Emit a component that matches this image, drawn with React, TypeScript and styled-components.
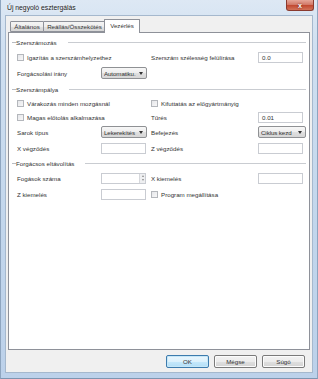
import React from "react";
import styled, { createGlobalStyle } from "styled-components";

const GlobalStyle = createGlobalStyle`
  html, body { margin: 0; padding: 0; background: #fff; }
  body { font-family: "Liberation Sans", Arial, sans-serif; }
  * { box-sizing: border-box; }
`;

const FONT = "6.2px";
const TEXT = "#333333";

const Window = styled.div`
  width: 318px;
  height: 379px;
  display: flex;
  flex-direction: column;
  padding: 0 4px 6px 4px;
  background: linear-gradient(180deg, #dde8f4 0%, #d0e0f1 12%, #c2d6ec 60%, #bcd1ea 100%);
  border-left: 1px solid #8ea5bf;
  border-right: 1px solid #8ea5bf;
  border-bottom: 1px solid #7d95b0;
  overflow: hidden;
`;

const TitleBar = styled.div`
  height: 15px;
  display: flex;
  align-items: flex-start;
  margin-left: -1px;
  margin-right: -1px;
`;

const Title = styled.div`
  font-family: "Liberation Sans", Arial, sans-serif;
  font-size: 6.8px;
  color: #1b1b1b;
  padding-left: 3px;
  line-height: 15px;
  text-shadow: 0 0 3px rgba(255, 255, 255, 0.9);
`;

const CloseButton = styled.div`
  margin-left: auto;
  width: 28px;
  height: 11px;
  border: 1px solid #8a3a2e;
  border-top: none;
  border-radius: 0 0 3px 3px;
  background: linear-gradient(180deg, #e6a699 0%, #d27a69 45%, #c24a32 55%, #d2735a 100%);
  display: flex;
  align-items: center;
  justify-content: center;
  color: #fff;
  font-size: 7px;
  font-weight: bold;
  line-height: 1;
  text-shadow: 0 0 2px #5a1a10;
`;

const Client = styled.div`
  flex: 1;
  display: flex;
  flex-direction: column;
  background: #f0f0f0;
  border: 1px solid #a5b8cd;
  padding: 3px 2px 0 2px;
`;

const TabRow = styled.div`
  height: 14px;
  display: flex;
  align-items: flex-end;
  padding-left: 2px;
  position: relative;
  z-index: 1;
  margin-bottom: -1px;
`;

const Tab = styled.div<{ $active?: boolean; $w: number }>`
  width: ${(p) => p.$w}px;
  height: ${(p) => (p.$active ? 14 : 11)}px;
  margin-left: ${(p) => (p.$active ? -2 : -1)}px;
  margin-bottom: ${(p) => (p.$active ? 0 : 1)}px;
  &:first-child { margin-left: 0; }
  border: 1px solid #8e9199;
  border-bottom: ${(p) => (p.$active ? "none" : "1px solid #8e9199")};
  border-radius: 1px 1px 0 0;
  background: ${(p) =>
    p.$active ? "#ffffff" : "linear-gradient(180deg, #f4f4f4 0%, #ededed 50%, #e0e0e0 51%, #d6d6d6 100%)"};
  font-size: ${FONT};
  color: ${TEXT};
  display: flex;
  align-items: ${(p) => (p.$active ? "flex-start" : "center")};
  padding-top: ${(p) => (p.$active ? 2 : 0)}px;
  justify-content: center;
  white-space: nowrap;
  position: relative;
  z-index: ${(p) => (p.$active ? 2 : 1)};
`;

const Panel = styled.div`
  height: 318px;
  background: #fff;
  border: 1px solid #8e9199;
  padding: 2px 3px 0 3px;
  display: flex;
  flex-direction: column;
`;

const Group = styled.div<{ $mt?: number }>`
  margin-top: ${(p) => p.$mt ?? 0}px;
  display: flex;
  flex-direction: column;
`;

const GroupHeader = styled.div`
  height: 14px;
  display: flex;
  align-items: center;
`;

const Dash = styled.div`
  width: 4px;
  height: 1px;
  background: #b9bcc2;
`;

const GroupLabel = styled.div`
  font-size: ${FONT};
  color: ${TEXT};
  white-space: nowrap;
`;

const GroupLine = styled.div`
  flex: 1;
  height: 1px;
  margin-left: 11px;
  background: #c9ccd1;
`;

const Row = styled.div<{ $h?: number }>`
  height: ${(p) => p.$h ?? 16}px;
  display: grid;
  grid-template-columns: 84px 50px 107px 49px;
  align-items: center;
  padding-left: 5px;
`;

const Label = styled.div`
  font-size: ${FONT};
  color: ${TEXT};
  white-space: nowrap;
`;

const CheckCell = styled.div<{ $span?: number }>`
  grid-column: span ${(p) => p.$span ?? 1};
  display: flex;
  align-items: center;
  gap: 3px;
  font-size: ${FONT};
  color: ${TEXT};
  white-space: nowrap;
`;

const Box = styled.div`
  width: 7px;
  height: 7px;
  border: 1px solid #b4b7bc;
  background: linear-gradient(135deg, #e6e7ea 0%, #f7f7f8 100%);
`;

const Input = styled.div<{ $w?: number }>`
  width: ${(p) => p.$w ?? 45}px;
  height: 11px;
  border: 1px solid #c9ccd2;
  background: #fff;
  font-size: ${FONT};
  color: ${TEXT};
  padding-left: 3px;
  display: flex;
  align-items: center;
`;

const Spinner = styled.div`
  width: 45px;
  height: 11px;
  border: 1px solid #c9ccd2;
  background: #fff;
  display: flex;
  justify-content: flex-end;
`;

const SpinButtons = styled.div`
  width: 6px;
  display: flex;
  flex-direction: column;
  border-left: 1px solid #d6d8dc;
  background: #eeeff1;
`;

const SpinHalf = styled.div<{ $up?: boolean }>`
  flex: 1;
  display: flex;
  align-items: center;
  justify-content: center;
  &::after {
    content: "";
    border-left: 1.5px solid transparent;
    border-right: 1.5px solid transparent;
    ${(p) => (p.$up ? "border-bottom: 2px solid #8a8a8a;" : "border-top: 2px solid #8a8a8a;")}
  }
`;

const Select = styled.div<{ $w?: number }>`
  width: ${(p) => p.$w ?? 46}px;
  height: 12px;
  border: 1px solid #8f9194;
  border-radius: 2px;
  background: linear-gradient(180deg, #f7f7f7 0%, #ededed 50%, #e0e0e0 51%, #d6d6d6 100%);
  font-size: ${FONT};
  color: ${TEXT};
  display: flex;
  align-items: center;
  padding: 0 3px 0 2px;
  gap: 1px;
`;

const SelectText = styled.span`
  flex: 1;
  min-width: 0;
  overflow: hidden;
  white-space: nowrap;
  letter-spacing: -0.1px;
`;

const Arrow = styled.span`
  flex: none;
  width: 0;
  height: 0;
  border-left: 2.5px solid transparent;
  border-right: 2.5px solid transparent;
  border-top: 3px solid #333;
`;

const Footer = styled.div`
  height: 22px;
  display: flex;
  justify-content: flex-end;
  align-items: flex-start;
  padding-top: 5px;
  padding-right: 5px;
  gap: 5px;
`;

const Button = styled.div<{ $default?: boolean }>`
  width: 43px;
  height: 13px;
  border: 1px solid ${(p) => (p.$default ? "#3d7bad" : "#7a7a7a")};
  border-radius: 2px;
  background: ${(p) =>
    p.$default
      ? "linear-gradient(180deg, #eaf6fd 0%, #dcf1fc 50%, #c6e8fb 51%, #b3def6 100%)"
      : "linear-gradient(180deg, #f3f3f3 0%, #ececec 50%, #dfdfdf 51%, #d4d4d4 100%)"};
  box-shadow: inset 0 0 0 1px ${(p) => (p.$default ? "#c6e7f8" : "#fcfcfc")};
  font-size: ${FONT};
  color: ${TEXT};
  display: flex;
  align-items: center;
  justify-content: center;
`;

export default function App() {
  return (
    <>
      <GlobalStyle />
      <Window>
        <TitleBar>
          <Title>Új negyoló esztergálás</Title>
          <CloseButton>x</CloseButton>
        </TitleBar>
        <Client>
          <TabRow>
            <Tab $w={34}>Általános</Tab>
            <Tab $w={63}>Reállás/Összekötés</Tab>
            <Tab $w={36} $active>
              Vezérlés
            </Tab>
          </TabRow>
          <Panel>
            <Group>
              <GroupHeader>
                <Dash />
                <GroupLabel>Szerszámozás</GroupLabel>
                <GroupLine />
              </GroupHeader>
              <Row>
                <CheckCell $span={2}>
                  <Box />
                  Igazítás a szerszámhelyzethez
                </CheckCell>
                <Label>Szerszám szélesség felülírása</Label>
                <Input>0.0</Input>
              </Row>
              <Row>
                <Label>Forgácsolási irány</Label>
                <Select>
                  <SelectText>Automatiku.</SelectText>
                  <Arrow />
                </Select>
              </Row>
            </Group>
            <Group $mt={1}>
              <GroupHeader>
                <Dash />
                <GroupLabel>Szerszámpálya</GroupLabel>
                <GroupLine />
              </GroupHeader>
              <Row $h={14}>
                <CheckCell $span={2}>
                  <Box />
                  Várakozás minden mozgásnál
                </CheckCell>
                <CheckCell $span={2}>
                  <Box />
                  Kifuttatás az előgyártmányig
                </CheckCell>
              </Row>
              <Row $h={14}>
                <CheckCell $span={2}>
                  <Box />
                  Magas előtolás alkalmazása
                </CheckCell>
                <Label>Tűrés</Label>
                <Input>0.01</Input>
              </Row>
              <Row>
                <Label>Sarok típus</Label>
                <Select>
                  <SelectText>Lekerekítés</SelectText>
                  <Arrow />
                </Select>
                <Label>Befejezés</Label>
                <Select $w={48}>
                  <SelectText>Ciklus kezd</SelectText>
                  <Arrow />
                </Select>
              </Row>
              <Row>
                <Label>X végződés</Label>
                <Input $w={45} />
                <Label>Z végződés</Label>
                <Input />
              </Row>
            </Group>
            <Group>
              <GroupHeader>
                <Dash />
                <GroupLabel>Forgácsos eltávolítás</GroupLabel>
                <GroupLine />
              </GroupHeader>
              <Row>
                <Label>Fogások száma</Label>
                <Spinner>
                  <SpinButtons>
                    <SpinHalf $up />
                    <SpinHalf />
                  </SpinButtons>
                </Spinner>
                <Label>X kiemelés</Label>
                <Input />
              </Row>
              <Row>
                <Label>Z kiemelés</Label>
                <Input $w={45} />
                <CheckCell $span={2}>
                  <Box />
                  Program megállítása
                </CheckCell>
              </Row>
            </Group>
          </Panel>
          <Footer>
            <Button $default>OK</Button>
            <Button>Mégse</Button>
            <Button>Súgó</Button>
          </Footer>
        </Client>
      </Window>
    </>
  );
}
